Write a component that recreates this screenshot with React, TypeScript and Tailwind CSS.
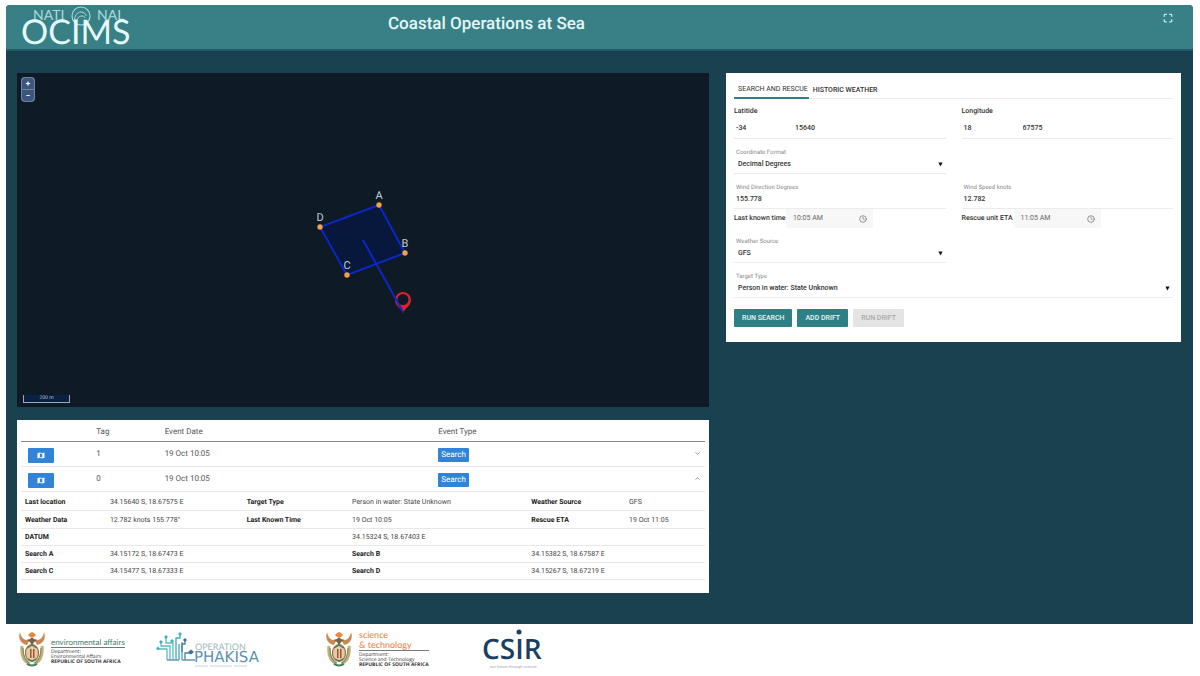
import React from 'react';
import { ChevronDown, ChevronUp, Clock, Maximize } from 'lucide-react';

const events = [
  { tag: '1', date: '19 Oct 10:05', type: 'Search', open: false },
  { tag: '0', date: '19 Oct 10:05', type: 'Search', open: true }
];

const points = [
  { name: 'A', x: 362, y: 132 },
  { name: 'B', x: 388, y: 180 },
  { name: 'C', x: 330, y: 202 },
  { name: 'D', x: 303, y: 154 }
];

const OcimsLogo = () => (
  <svg width="118" height="44" viewBox="0 0 118 44" role="img" aria-label="National OCIMS" className="overflow-visible" fontFamily="Lato, sans-serif">
    <g fill="#a9dbdc" fontSize="14">
      <text x="12" y="15">NATI</text>
      <text x="76" y="15">NAL</text>
    </g>
    <g fill="none" stroke="#a9dbdc">
      <circle cx="60" cy="11" r="9" strokeWidth="1.2" />
      <path d="M54 16c-1-5 2-9 6-9 3 0 5 2 5 4M56 17c0-4 2-6 5-6 2 0 3 1 3 2" strokeWidth="1" />
    </g>
    <text x="0" y="39" fill="#e4fafa" fontSize="34">OCIMS</text>
  </svg>
);

const MapIcon = () => (
  <svg width="8" height="7" viewBox="0 0 8 7" aria-hidden="true">
    <path d="M0.5 1.2L2.8 0.4v5.4L0.5 6.6zM7.5 0.4L5.2 1.2v5.4l2.3-0.8z" fill="#fff" />
    <path d="M2.8 0.9l2.4 0.7M2.8 5.4l2.4 0.7" stroke="#fff" strokeWidth="0.9" />
  </svg>
);

const SearchMap = () => (
  <section aria-label="Map" className="relative bg-[#0e1a26]">
    <svg viewBox="0 0 692 334" className="block w-full" fontFamily="Roboto, sans-serif">
      <polygon points="362,132 388,180 330,202 303,154" fill="#08173c" stroke="#0b27c4" strokeWidth="2" />
      <path
        d="M386 240c-2-5-8-7-8-13a8 8 0 0 1 16 0c0 6-6 8-8 13zm0-19a5.5 5.5 0 0 0 0 11 5.5 5.5 0 0 0 0-11z"
        fill="#d9232b"
        fillRule="evenodd"
      />
      <path d="M346 167l40 72" stroke="#0b27c4" strokeWidth="2" />
      {points.map((point) => (
        <g key={point.name}>
          <circle cx={point.x} cy={point.y} r="2.7" fill="#f0a050" />
          <text x={point.x} y={point.y - 6} textAnchor="middle" fontSize="11" fill="#c4ccd4">
            {point.name}
          </text>
        </g>
      ))}
    </svg>

    <div className="absolute top-1 left-1 flex flex-col gap-px rounded-sm bg-[#71829b] p-px text-[8px] font-bold text-white">
      <button type="button" aria-label="Zoom in" className="h-[11px] w-3 rounded-t-sm bg-[#3c567f] leading-[11px]">+</button>
      <button type="button" aria-label="Zoom out" className="h-[11px] w-3 rounded-b-sm bg-[#3c567f] leading-[11px]">−</button>
    </div>

    <div className="absolute bottom-1 left-[6px] h-2 w-[47px] border border-t-0 border-[#9aa8b8] bg-[#0b2143] text-center text-[5px] leading-[7px] text-[#b4c0cc]">
      200 m
    </div>
  </section>
);

const EventsTable = () => (
  <section className="bg-white px-1 pt-[3px] pb-[13px] text-[#555]">
    <table className="w-full table-fixed border-collapse text-left text-[8px]">
      <colgroup>
        <col className="w-[11%]" />
        <col className="w-[10%]" />
        <col className="w-[40%]" />
        <col />
        <col className="w-5" />
      </colgroup>
      <thead>
        <tr className="h-[18px] border-b border-[#888]">
          <th aria-label="Map"></th>
          <th className="font-normal">Tag</th>
          <th className="font-normal">Event Date</th>
          <th className="font-normal">Event Type</th>
          <th aria-label="Details"></th>
        </tr>
      </thead>
      <tbody>
        {events.map((event) => (
          <tr key={event.tag} className="h-[25px] border-b border-[#e8e8e8]">
            <td className="pt-[3px] pl-[7px]">
              <button
                type="button"
                aria-label="Show on map"
                className="flex h-[15px] w-[26px] items-center justify-center rounded-[1px] bg-[#3085d9]"
              >
                <MapIcon />
              </button>
            </td>
            <td>{event.tag}</td>
            <td>{event.date}</td>
            <td className="pt-[2px]">
              <span className="inline-block rounded-[1px] bg-[#3085d9] px-[3px] leading-[14px] text-white">{event.type}</span>
            </td>
            <td>
              <button type="button" aria-label={event.open ? 'Collapse' : 'Expand'} className="block pl-[9px]">
                {event.open ? <ChevronUp size={7} /> : <ChevronDown size={7} />}
              </button>
            </td>
          </tr>
        ))}
      </tbody>
    </table>

    <table className="mt-px w-full table-fixed border-collapse text-left text-[7px] text-[#444] [&_td]:pt-px [&_th]:pt-px [&_th]:font-bold [&_th]:text-[#222] [&_tr]:border-b [&_tr]:border-[#e8e8e8]">
      <colgroup>
        <col className="w-[13%]" />
        <col className="w-[20%]" />
        <col className="w-[15.4%]" />
        <col className="w-[26.2%]" />
        <col className="w-[14.3%]" />
        <col />
      </colgroup>
      <tbody className="[&_td:first-child]:pl-1 [&_th:first-child]:pl-1">
        <tr className="h-[18px]">
          <th>Last location</th>
          <td>34.15640 S, 18.67575 E</td>
          <th>Target Type</th>
          <td>Person in water: State Unknown</td>
          <th>Weather Source</th>
          <td>GFS</td>
        </tr>
        <tr className="h-[18px]">
          <th>Weather Data</th>
          <td>12.782 knots 155.778°</td>
          <th>Last Known Time</th>
          <td>19 Oct 10:05</td>
          <th>Rescue ETA</th>
          <td>19 Oct 11:05</td>
        </tr>
        <tr className="h-[17px]">
          <th colSpan={3}>DATUM</th>
          <td colSpan={3}>34.15324 S, 18.67403 E</td>
        </tr>
        <tr className="h-[17px]">
          <th>Search A</th>
          <td colSpan={2}>34.15172 S, 18.67473 E</td>
          <th>Search B</th>
          <td colSpan={2}>34.15382 S, 18.67587 E</td>
        </tr>
        <tr className="h-[17px]">
          <th>Search C</th>
          <td colSpan={2}>34.15477 S, 18.67333 E</td>
          <th>Search D</th>
          <td colSpan={2}>34.15267 S, 18.67219 E</td>
        </tr>
      </tbody>
    </table>
  </section>
);

const Coordinate = ({ label, degrees, decimals }: { label: string; degrees: string; decimals: string }) => (
  <fieldset className="min-w-0">
    <legend className="h-3 text-[7px] leading-3">{label}</legend>
    <div className="flex h-[22px] border-b border-[#ececec]">
      <input aria-label={`${label} degrees`} defaultValue={degrees} className="w-[59px] px-[2px] pt-[2px]" />
      <input aria-label={`${label} decimals`} defaultValue={decimals} className="min-w-0 flex-1 px-[2px] pt-[2px]" />
    </div>
  </fieldset>
);

const SelectField = ({ id, label, value }: { id: string; label: string; value: string }) => (
  <div className="border-b border-[#ececec]">
    <label htmlFor={id} className="block h-2 pl-[2px] text-[6px] leading-[10px] font-normal text-[#888]">{label}</label>
    <div className="relative">
      <select id={id} className="block h-[17px] w-full appearance-none pb-px pl-1">
        <option>{value}</option>
      </select>
      <svg viewBox="0 0 6 6" className="pointer-events-none absolute top-[6px] right-[3px] h-[5px] w-[5px]">
        <path d="M0.5 0.5h5l-2.5 5z" fill="#111" />
      </svg>
    </div>
  </div>
);

const NumberField = ({ id, label, value }: { id: string; label: string; value: string }) => (
  <div className="border-b border-[#ececec]">
    <label htmlFor={id} className="block h-2 pl-[2px] text-[6px] leading-[10px] font-normal text-[#888]">{label}</label>
    <input id={id} defaultValue={value} className="block h-[17px] w-full px-[2px] pb-[2px]" />
  </div>
);

const TimeField = ({ id, label, value }: { id: string; label: string; value: string }) => (
  <div className="flex h-[19px] items-center">
    <label htmlFor={id} className="w-[52px] shrink-0 whitespace-nowrap">{label}</label>
    <div className="flex h-full w-[87px] items-center bg-[#f7f7f7] pr-[6px] pl-[7px] font-normal text-[#666]">
      <input id={id} defaultValue={value} className="min-w-0 flex-1" />
      <Clock size={8} />
    </div>
  </div>
);

const SearchForm = () => (
  <section className="bg-white px-2 pt-[9px] pb-[15px] text-[7px] font-medium text-[#333]">
    <div role="tablist" className="flex h-[17px] border-b border-[#ececec]">
      <button type="button" role="tab" aria-selected="true" className="-mb-px border-b-2 border-[#2f8085] pr-px pl-1 font-normal">
        SEARCH AND RESCUE
      </button>
      <button type="button" role="tab" aria-selected="false" className="px-1">
        HISTORIC WEATHER
      </button>
    </div>

    <form className="pt-[6px]">
      <div className="grid grid-cols-2 gap-x-4">
        <Coordinate label="Latitide" degrees="-34" decimals="15640" />
        <Coordinate label="Longitude" degrees="18" decimals="67575" />
      </div>
      <div className="grid grid-cols-2 gap-x-4 pt-[9px]">
        <SelectField id="format" label="Coordinate Format" value="Decimal Degrees" />
      </div>
      <div className="grid grid-cols-2 gap-x-4 pt-[9px]">
        <NumberField id="wind-direction" label="Wind Direction Degrees" value="155.778" />
        <NumberField id="wind-speed" label="Wind Speed knots" value="12.782" />
        <TimeField id="last-known" label="Last known time" value="10:05 AM" />
        <TimeField id="rescue-eta" label="Rescue unit ETA" value="11:05 AM" />
      </div>
      <div className="grid grid-cols-2 gap-x-4 pt-[9px]">
        <SelectField id="weather" label="Weather Source" value="GFS" />
      </div>
      <div className="pt-[9px]">
        <SelectField id="target" label="Target Type" value="Person in water: State Unknown" />
      </div>
      <div className="flex gap-[5px] pt-[11px]">
        <button type="button" className="h-[18px] rounded-[1px] bg-[#2f8085] px-2 text-[#e6f5f5]">RUN SEARCH</button>
        <button type="button" className="h-[18px] rounded-[1px] bg-[#2f8085] px-2 text-[#e6f5f5]">ADD DRIFT</button>
        <button type="button" disabled className="h-[18px] rounded-[1px] bg-[#e4e4e4] px-2 text-[#aaa]">RUN DRIFT</button>
      </div>
    </form>
  </section>
);

const CoatOfArms = () => (
  <svg width="26" height="36" viewBox="0 0 26 36" className="shrink-0" aria-hidden="true">
    <path d="M8 14C1 12-1 7 1 1c1 6 4 8 9 9M18 14c7-2 9-7 7-13-1 6-4 8-9 9" fill="#c9884f" />
    <path d="M9 4l2-2 2-1 2 1 2 2-2 2h-4z" fill="#e7883c" />
    <path d="M7 9l4-1 2-2 2 2 4 1-4 2-2 4-2-4z" fill="#7a6340" />
    <path d="M3 15c-1 8 1 15 8 18M23 15c1 8-1 15-8 18" fill="none" stroke="#c9ab73" strokeWidth="3" />
    <path d="M4 17c0 7 2 12 6 15M22 17c0 7-2 12-6 15" fill="none" stroke="#5d9a70" strokeWidth="1.2" />
    <ellipse cx="13" cy="22" rx="6.5" ry="8.5" fill="#dfcda4" stroke="#b5603f" strokeWidth="1.2" />
    <path d="M11 18h1.5v9H11zM14 18h1.5v9H14z" fill="#a5523c" />
    <path d="M8 17l5-3 5 3M9 28l4 2 4-2" fill="none" stroke="#39785a" strokeWidth="1.2" />
    <path d="M8 33q5 3 10 0" fill="none" stroke="#3a7a56" strokeWidth="2" />
  </svg>
);

const PhakisaLogo = () => (
  <svg width="108" height="38" viewBox="0 0 108 38" role="img" aria-label="Operation Phakisa" className="overflow-visible">
    <g fill="none" strokeWidth="1.3">
      <path d="M12 30V19H4M15 30V16H6V12M18 30V13H11V8" stroke="#5fb9c9" />
      <path d="M21 30V8h4V4M24 30V14M27 30V12" stroke="#45a5ba" />
      <path d="M27 22V14h3V10M30 30V23h6" stroke="#4c7f9e" />
      <path d="M12 30h12M27 30h13" stroke="#6597b4" />
    </g>
    <g fill="#48adbd">
      <path d="M1 18.500l2-2 2 2-2 2zM4 12l2-2 2 2-2 2zM9 7l2-2 2 2-2 2zM15 11l2-2 2 2-2 2zM23 4l2-2 2 2-2 2z" />
      <path d="M28 10l2-2 2 2-2 2zM33 22l3-2.5 3 2.5-3 2.5z" fill="#456f94" />
    </g>
    <text x="40" y="20" fontFamily="Lato, sans-serif" fontSize="9" fill="#a0b5c1">OPERATION</text>
    <text x="39" y="32" fontFamily="DejaVu Sans, sans-serif" fontSize="15" fill="#5c91ae">PHAKISA</text>
    <path d="M40 36h54" stroke="#c5d0d6" strokeDasharray="13 2 22 2" />
  </svg>
);

const CsirLogo = () => (
  <svg width="62" height="42" viewBox="0 0 62 42" role="img" aria-label="CSIR" className="overflow-visible">
    <text x="0" y="31" fontFamily="Open Sans, sans-serif" fontSize="28" fontWeight="600" fill="#1b3f61">CSIR</text>
    <circle cx="37" cy="4" r="2.5" fill="#1b3f61" />
    <text x="8" y="40" fontFamily="Lato, sans-serif" fontSize="4" fill="#9aa6b0">our future through science</text>
  </svg>
);

const Footer = () => (
  <footer className="flex items-center px-[13px] pt-1 font-['Open_Sans',sans-serif] text-[#333]">
    <div className="flex w-[136px] items-center gap-[6px]">
      <CoatOfArms />
      <div className="pt-1 text-[5px] leading-[5px] whitespace-nowrap">
        <p className="mb-[2px] border-b border-[#777] font-['Lato',sans-serif] text-[8px] leading-[10px] text-[#3e8068]">environmental affairs</p>
        <p>Department:</p>
        <p>Environmental Affairs</p>
        <p className="font-bold">REPUBLIC OF SOUTH AFRICA</p>
      </div>
    </div>
    <PhakisaLogo />
    <div className="ml-[63px] flex w-[156px] items-center gap-[7px]">
      <CoatOfArms />
      <div className="text-[5px] leading-[5px] whitespace-nowrap">
        <p className="mb-[2px] border-b border-[#777] font-['Lato',sans-serif] text-[9px] leading-[10px] text-[#ec7b3c]">
          science
          <br />
          &amp; technology
        </p>
        <p>Department:</p>
        <p>Science and Technology</p>
        <p className="font-bold">REPUBLIC OF SOUTH AFRICA</p>
      </div>
    </div>
    <CsirLogo />
  </footer>
);

const App: React.FC = () => {
  return (
    <div className="min-h-screen bg-white pt-[5px] pr-[7px] pl-[6px] font-['Roboto',sans-serif] [text-rendering:geometricPrecision]">
      <div className="overflow-hidden rounded-t-sm bg-[#19414f]">
        <header className="grid h-[46px] grid-cols-[1fr_auto_1fr] items-start border-b-2 border-[#235a66] bg-[#388085] px-[15px]">
          <OcimsLogo />
          <h1 className="pt-[5px] pr-[226px] text-[17px] leading-7 font-medium text-[#e2f7f8]">Coastal Operations at Sea</h1>
          <button type="button" aria-label="Fullscreen" className="mt-2 mr-[5px] justify-self-end text-[#c9edef]">
            <Maximize size={10} strokeWidth={3} />
          </button>
        </header>

        <main className="grid grid-cols-[692fr_455fr] items-start gap-x-[17px] pt-[22px] pr-3 pb-[31px] pl-[11px]">
          <div className="flex min-w-0 flex-col gap-[13px]">
            <SearchMap />
            <EventsTable />
          </div>
          <SearchForm />
        </main>
      </div>
      <Footer />
    </div>
  );
};

export default App;
